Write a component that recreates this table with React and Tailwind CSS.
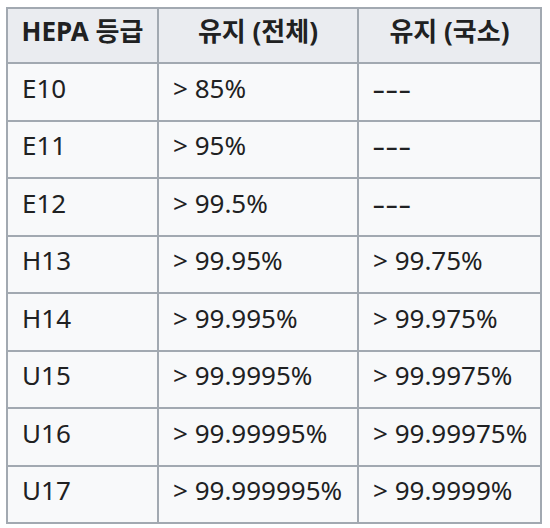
import React from "react";

const DASH = "–––";

const rows = [
  ["E10", "> 85%", DASH],
  ["E11", "> 95%", DASH],
  ["E12", "> 99.5%", DASH],
  ["H13", "> 99.95%", "> 99.75%"],
  ["H14", "> 99.995%", "> 99.975%"],
  ["U15", "> 99.9995%", "> 99.9975%"],
  ["U16", "> 99.99995%", "> 99.99975%"],
  ["U17", "> 99.999995%", "> 99.9999%"],
];

export default function App() {
  return (
    <div
      className="w-[550px] h-[528px] bg-white pl-[6px] pt-[7px] text-[#202122]"
      style={{ fontFamily: '"Noto Sans", "Noto Sans CJK KR", sans-serif' }}
    >
      <table className="border-collapse border border-[#a2a9b1] text-[26px] leading-none">
        <thead>
          <tr className="h-[55px] bg-[#eaecf0]">
            <th className="w-[151px] border-2 border-[#a2a9b1] pb-[9px] text-center font-bold">HEPA 등급</th>
            <th className="w-[200px] border-2 border-[#a2a9b1] pb-[9px] text-center font-bold">유지 (전체)</th>
            <th className="w-[183px] border-2 border-[#a2a9b1] pb-[9px] text-center font-bold">유지 (국소)</th>
          </tr>
        </thead>
        <tbody>
          {rows.map((r) => (
            <tr key={r[0]} className="h-[57.5px] bg-[#f8f9fa]">
              {r.map((c, i) => (
                <td
                  key={i}
                  className="border-2 border-[#a2a9b1] pl-[14px] pb-[8px] text-left whitespace-nowrap"
                >
                  {c === DASH ? (
                    <span className="text-[23px] font-semibold tracking-[1.5px]">{c}</span>
                  ) : (
                    c
                  )}
                </td>
              ))}
            </tr>
          ))}
        </tbody>
      </table>
    </div>
  );
}
